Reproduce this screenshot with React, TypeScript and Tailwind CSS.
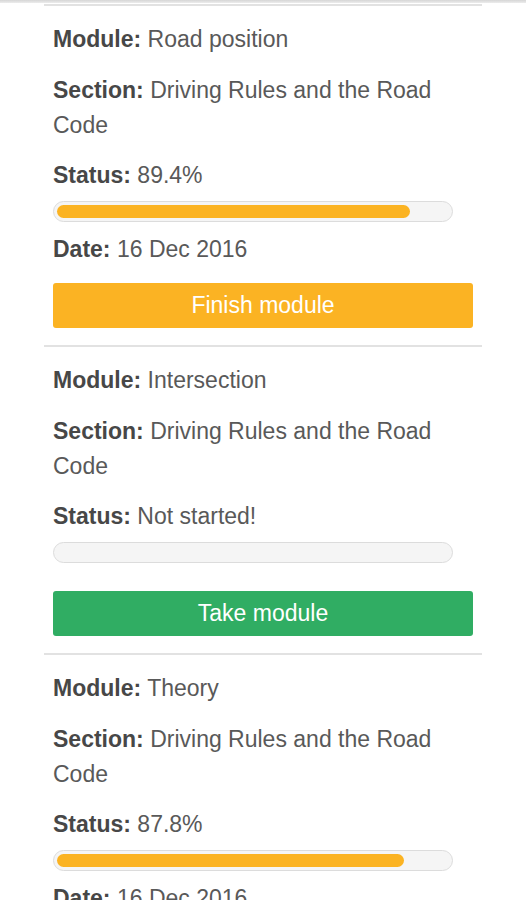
import React from "react";

type Module = {
  name: string;
  section: string;
  progress: number | null;
  date?: string;
};

const modules: Module[] = [
  { name: "Road position", section: "Driving Rules and the Road Code", progress: 89.4, date: "16 Dec 2016" },
  { name: "Intersection", section: "Driving Rules and the Road Code", progress: null },
  { name: "Theory", section: "Driving Rules and the Road Code", progress: 87.8, date: "16 Dec 2016" },
];

const Field = ({ label, children }: { label: string; children: React.ReactNode }) => (
  <p className="text-[23px] leading-[35px] text-[#595959]">
    <span className="font-bold text-[#474747]">{label}:</span> {children}
  </p>
);

const ModuleItem = ({ item }: { item: Module }) => {
  const started = item.progress !== null;

  return (
    <div className="border-t-2 border-[#e2e2e2] px-[9px] pb-[17px] pt-4">
      <Field label="Module">{item.name}</Field>
      <div className="mt-4">
        <Field label="Section">{item.section}</Field>
      </div>
      <div className="mt-[15px]">
        <Field label="Status">{started ? `${item.progress}%` : "Not started!"}</Field>
      </div>
      <div className="mt-2 h-[21px] w-[400px] rounded-full border border-[#dcdcdc] bg-[#f5f5f5] py-[3px] pl-[3px]">
        {started && (
          <div
            className="h-[13px] rounded-full bg-[#fbb322]"
            style={{ width: `${item.progress}%` }}
          />
        )}
      </div>
      {item.date && (
        <div className="mt-[10px]">
          <Field label="Date">{item.date}</Field>
        </div>
      )}
      <button
        className={`block h-[45px] w-full rounded-[3px] text-[23px] text-white ${
          started ? "mt-4 bg-[#fbb323]" : "mt-[28px] bg-[#30ad63]"
        }`}
      >
        {started ? "Finish module" : "Take module"}
      </button>
    </div>
  );
};

export default function App() {
  return (
    <div className="min-h-screen bg-white font-['Liberation_Sans',Arial,sans-serif]">
      <div className="h-[3px] bg-gradient-to-b from-[#d6d6d6] to-[#ececec]" />
      <div className="mx-[44px] pt-px">
        {modules.map((m) => (
          <ModuleItem key={m.name} item={m} />
        ))}
      </div>
    </div>
  );
}
